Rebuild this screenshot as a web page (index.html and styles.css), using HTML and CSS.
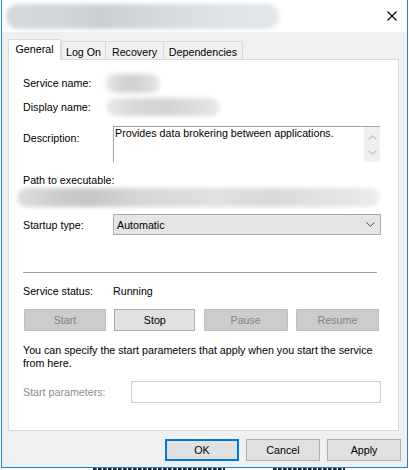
FILE: index.html
```html
<!DOCTYPE html>
<html>
<head>
<meta charset="utf-8">
<link rel="stylesheet" href="styles.css">
</head>
<body>
<div class="window">
  <div class="titlebar">
    <div class="blob title-blob"></div>
    <svg class="close" width="10" height="10" viewBox="0 0 10 10"><path d="M0.5 0.5L9.5 9.5M9.5 0.5L0.5 9.5" stroke="#000" stroke-width="1.1" fill="none"/></svg>
  </div>
  <div class="content">
    <div class="tabs">
      <div class="tab tab-general selected">General</div>
      <div class="tab tab-logon">Log On</div>
      <div class="tab tab-recovery">Recovery</div>
      <div class="tab tab-deps">Dependencies</div>
    </div>
    <div class="panel">
      <div class="row row-service">
        <div class="label">Service name:</div>
        <div class="blob blob-service"></div>
      </div>
      <div class="row row-display">
        <div class="label">Display name:</div>
        <div class="blob blob-display"></div>
      </div>
      <div class="row row-desc">
        <div class="label label-desc">Description:</div>
        <div class="descbox">
          <div class="desctext">Provides data brokering between applications.</div>
          <div class="vscroll">
            <svg width="9" height="5" viewBox="0 0 9 5"><path d="M0.5 4.5L4.5 0.8L8.5 4.5" stroke="#c4c4c4" stroke-width="1.1" fill="none"/></svg>
            <svg width="9" height="5" viewBox="0 0 9 5"><path d="M0.5 0.5L4.5 4.2L8.5 0.5" stroke="#c4c4c4" stroke-width="1.1" fill="none"/></svg>
          </div>
        </div>
      </div>
      <div class="path-label">Path to executable:</div>
      <div class="blob blob-path"></div>
      <div class="row row-startup">
        <div class="label">Startup type:</div>
        <div class="combo">
          <span>Automatic</span>
          <svg width="9" height="5" viewBox="0 0 9 5"><path d="M0.5 0.5L4.5 4.3L8.5 0.5" stroke="#444" stroke-width="1" fill="none"/></svg>
        </div>
      </div>
      <div class="separator"></div>
      <div class="row row-status">
        <div class="label">Service status:</div>
        <div class="value">Running</div>
      </div>
      <div class="svc-buttons">
        <div class="btn disabled btn-start">Start</div>
        <div class="btn btn-stop">Stop</div>
        <div class="btn disabled btn-pause">Pause</div>
        <div class="btn disabled btn-resume">Resume</div>
      </div>
      <p class="hint">You can specify the start parameters that apply when you start the service from here.</p>
      <div class="row row-params">
        <div class="label label-params">Start parameters:</div>
        <div class="params-input"></div>
      </div>
    </div>
    <div class="dialog-buttons">
      <div class="btn dbtn default">OK</div>
      <div class="btn dbtn">Cancel</div>
      <div class="btn dbtn">Apply</div>
    </div>
  </div>
</div>
<div class="desk">
  <span class="desk-a"></span>
  <span class="desk-b"></span>
</div>
</body>
</html>
```
FILE: styles.css
```css
* { box-sizing: border-box; }
html, body {
  margin: 0;
  padding: 0;
}
body {
  width: 409px;
  height: 470px;
  overflow: hidden;
  background: #ffffff;
  font-family: "Liberation Sans", Arial, sans-serif;
  font-size: 10.7px;
  line-height: 12px;
  color: #000;
}
.window {
  margin-left: 1px;
  width: 407px;
  height: 468px;
  border: 1px solid #1a84d8;
  border-top: 0;
  background: #f0f0f0;
  display: flex;
  flex-direction: column;
}
.titlebar {
  height: 32px;
  background: #fff;
  display: flex;
  align-items: center;
  padding-left: 4px;
  padding-right: 10px;
}
.blob {
  filter: blur(2px);
  border-radius: 10px;
}
.title-blob {
  width: 273px;
  height: 25px;
  background: linear-gradient(90deg, #d3d9df 0%, #cfd6dc 20%, #c9ced3 35%, #d4d9de 55%, #dde1e5 75%, #e4e7ea 100%);
  border-radius: 12px;
}
.close {
  margin-left: auto;
  display: block;
}
.content {
  flex: 1;
  padding: 7px 8px 0 6px;
  display: flex;
  flex-direction: column;
}
.tabs {
  display: flex;
  align-items: flex-end;
  height: 20px;
}
.tab {
  height: 18px;
  border: 1px solid #d9d9d9;
  border-bottom: 0;
  background: #f0f0f0;
  text-align: center;
  padding-top: 4px;
  white-space: nowrap;
}
.tab.selected {
  height: 21px;
  margin-bottom: -1px;
  background: #fff;
  position: relative;
  z-index: 1;
  padding-top: 3px;
}
.tab-general { width: 53px; }
.tab-logon { width: 45px; }
.tab-recovery { width: 59px; margin-left: -1px; }
.tab-deps { width: 80px; margin-left: -1px; }
.panel {
  height: 372px;
  border: 1px solid #d9d9d9;
  background: #fff;
  padding: 13px 0 0 14px;
  display: flex;
  flex-direction: column;
}
.row {
  display: flex;
  align-items: center;
}
.label {
  width: 90px;
  flex: none;
  white-space: nowrap;
}
.row-service { height: 20px; }
.row-display { height: 20px; margin-top: 4px; }
.blob-service {
  margin-left: -8px;
  width: 55px;
  height: 19px;
  background: linear-gradient(90deg, #ececec 0%, #d4d4d4 30%, #d0d0d0 55%, #e6e6e6 100%);
}
.blob-display {
  margin-left: -7px;
  width: 114px;
  height: 18px;
  background: linear-gradient(90deg, #eaeaea 0%, #d8d8d8 25%, #d3d3d3 50%, #dcdcdc 75%, #e8e8e8 100%);
}
.row-desc {
  margin-top: 9px;
  align-items: flex-start;
}
.label-desc { padding-top: 6px; }
.descbox {
  width: 267px;
  height: 36px;
  border-top: 1px solid #a3a3a3;
  border-left: 1px solid #a3a3a3;
  display: flex;
}
.desctext {
  flex: 1;
  padding-left: 1px;
  white-space: nowrap;
}
.vscroll {
  width: 16px;
  background: #f0f0f0;
  display: flex;
  flex-direction: column;
  align-items: center;
  justify-content: space-between;
  padding: 8px 0 7px;
}
.vscroll svg { display: block; }
.path-label { margin-top: 12px; }
.blob-path {
  margin-top: 2px;
  margin-left: -6px;
  width: 363px;
  height: 19px;
  background: linear-gradient(90deg, #dedede 0%, #cccccc 12%, #c6c6c6 20%, #d8d8d8 35%, #e0e0e0 55%, #dadada 70%, #e2e2e2 85%, #ececec 100%);
}
.row-startup { margin-top: 7px; }
.combo {
  width: 268px;
  height: 21px;
  background: #e5e5e5;
  border: 1px solid #acacac;
  display: flex;
  align-items: center;
  padding: 0 5px 0 3px;
}
.combo svg { margin-left: auto; display: block; }
.separator {
  margin-top: 37px;
  width: 354px;
  height: 1px;
  background: #a0a0a0;
}
.row-status { margin-top: 12px; }
.svc-buttons {
  margin-top: 12px;
  margin-left: 1px;
  width: 355px;
  display: flex;
  justify-content: space-between;
}
.btn {
  height: 22px;
  border: 1px solid #adadad;
  background: #e1e1e1;
  display: flex;
  align-items: center;
  justify-content: center;
}
.btn.disabled {
  background: #cccccc;
  border-color: #bfbfbf;
  color: #838383;
}
.btn-start { width: 82px; }
.btn-stop { width: 81px; }
.btn-pause { width: 84px; }
.btn-resume { width: 83px; }
.hint {
  margin: 13px 0 0;
  width: 358px;
  line-height: 13px;
}
.row-params { margin-top: 11px; }
.label-params {
  width: 108px;
  color: #8d8d8d;
}
.params-input {
  width: 250px;
  height: 22px;
  border: 1px solid #cfcfcf;
  background: #fff;
}
.dialog-buttons {
  margin-top: 8px;
  margin-right: -2px;
  display: flex;
  justify-content: flex-end;
  gap: 7px;
}
.dbtn { width: 74px; }
.dbtn.default { border: 2px solid #0078d7; }
.desk {
  height: 2px;
  display: flex;
}
.desk span {
  height: 2px;
  background: repeating-linear-gradient(90deg, #1f2a44 0 3px, #6b7a99 3px 4px, #ffffff 4px 5px);
}
.desk-a { margin-left: 93px; width: 132px; }
.desk-b { margin-left: 48px; width: 72px; }
```
